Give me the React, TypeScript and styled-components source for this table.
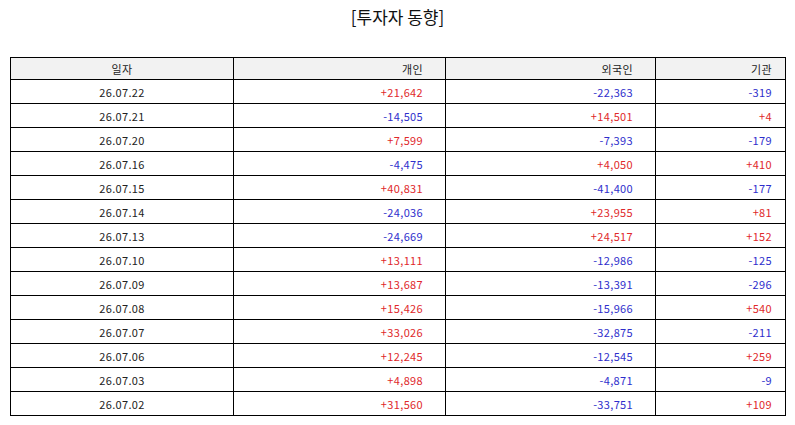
import styled, { createGlobalStyle } from "styled-components";

type Row = [string, number, number, number];

const rows: Row[] = [
  ["26.07.22", 21642, -22363, -319],
  ["26.07.21", -14505, 14501, 4],
  ["26.07.20", 7599, -7393, -179],
  ["26.07.16", -4475, 4050, 410],
  ["26.07.15", 40831, -41400, -177],
  ["26.07.14", -24036, 23955, 81],
  ["26.07.13", -24669, 24517, 152],
  ["26.07.10", 13111, -12986, -125],
  ["26.07.09", 13687, -13391, -296],
  ["26.07.08", 15426, -15966, 540],
  ["26.07.07", 33026, -32875, -211],
  ["26.07.06", 12245, -12545, 259],
  ["26.07.03", 4898, -4871, -9],
  ["26.07.02", 31560, -33751, 109],
];

const fmt = (n: number) =>
  (n > 0 ? "+" : "") + n.toLocaleString("en-US");

const GlobalStyle = createGlobalStyle`
  html, body {
    margin: 0;
    padding: 0;
    background: #fff;
  }
  body {
    font-family: "Noto Sans CJK KR", "DejaVu Sans", sans-serif;
  }
`;

const Page = styled.div({
  width: 795,
  padding: "7px 10px 0",
  boxSizing: "border-box",
});

const Title = styled.h1({
  margin: 0,
  marginBottom: 30,
  textAlign: "center",
  fontSize: 17,
  fontWeight: 400,
  lineHeight: "20px",
  color: "#111",
});

const Table = styled.table({
  width: 775,
  borderCollapse: "collapse",
  tableLayout: "fixed",
  fontSize: 11,
  letterSpacing: "0.35px",
  color: "#222",
});

const HeadCell = styled.th<{ $align: "center" | "right"; $pad: number }>`
  height: 21px;
  padding: 0 ${(p) => p.$pad}px 0 0;
  border: 1px solid #000;
  background: #f2f2f2;
  font-weight: 400;
  text-align: ${(p) => p.$align};
  line-height: 14px;
`;

const Cell = styled.td<{ $align: "center" | "right"; $pad: number; $tone?: "up" | "down" }>`
  height: 23px;
  padding: 0 ${(p) => p.$pad}px 0 0;
  border: 1px solid #000;
  text-align: ${(p) => p.$align};
  line-height: 14px;
  color: ${(p) =>
    p.$tone === "up" ? "#e0282a" : p.$tone === "down" ? "#2e2ecc" : "#222"};
`;

const cols = [
  { label: "일자", width: 223, align: "center" as const, pad: 0 },
  { label: "개인", width: 212, align: "right" as const, pad: 22 },
  { label: "외국인", width: 210, align: "right" as const, pad: 22 },
  { label: "기관", width: 130, align: "right" as const, pad: 13 },
];

const tone = (n: number) => (n > 0 ? "up" : "down");

export default function App() {
  return (
    <>
      <GlobalStyle />
      <Page>
        <Title>[투자자 동향]</Title>
        <Table>
          <colgroup>
            {cols.map((c) => (
              <col key={c.label} style={{ width: c.width }} />
            ))}
          </colgroup>
          <thead>
            <tr>
              {cols.map((c) => (
                <HeadCell key={c.label} $align={c.align} $pad={c.pad}>
                  {c.label}
                </HeadCell>
              ))}
            </tr>
          </thead>
          <tbody>
            {rows.map(([date, a, b, c]) => (
              <tr key={date}>
                <Cell $align="center" $pad={0}>
                  {date}
                </Cell>
                <Cell $align="right" $pad={22} $tone={tone(a)}>
                  {fmt(a)}
                </Cell>
                <Cell $align="right" $pad={22} $tone={tone(b)}>
                  {fmt(b)}
                </Cell>
                <Cell $align="right" $pad={13} $tone={tone(c)}>
                  {fmt(c)}
                </Cell>
              </tr>
            ))}
          </tbody>
        </Table>
      </Page>
    </>
  );
}
